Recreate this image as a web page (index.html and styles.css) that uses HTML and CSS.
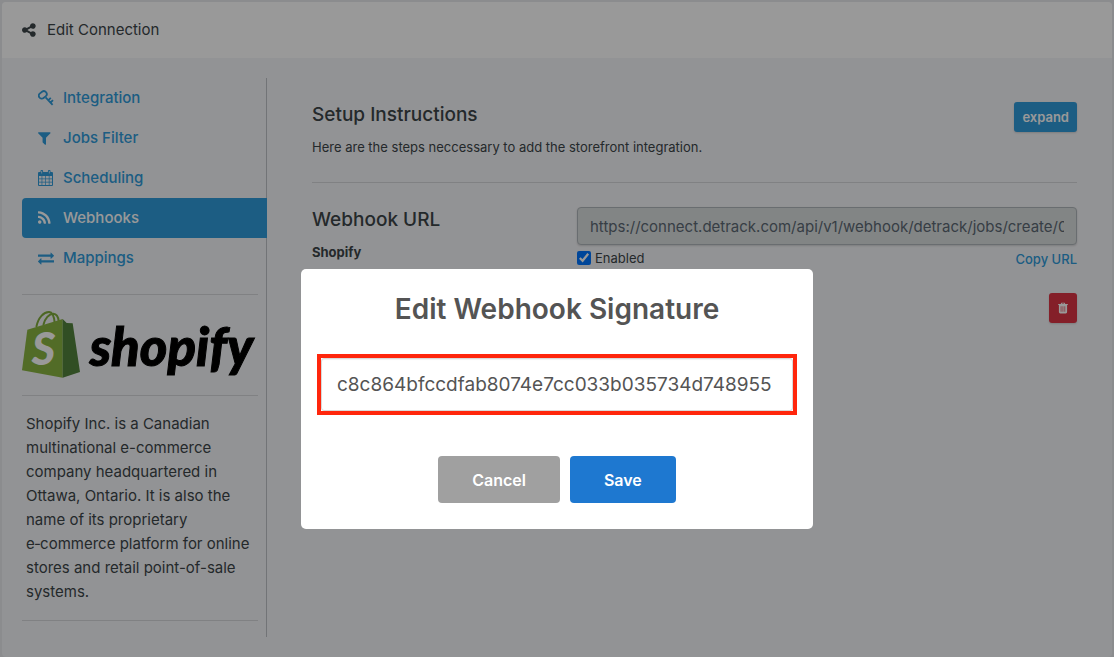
FILE: index.html
```
<!DOCTYPE html>
<html lang="en">
<head>
    <meta charset="UTF-8">
    <meta name="viewport" content="width=device-width, initial-scale=1.0">
    <title>Edit Connection</title>
    <link rel="stylesheet" href="styles.css">
</head>
<body>
    <div class="card">
        <header class="card-header">
            <svg class="icon" viewBox="256 0 1792 1792" aria-hidden="true"><path d="M1344 1024q133 0 226.500 93.500t93.500 226.500-93.500 226.500-226.500 93.500-226.500-93.500-93.500-226.500q0-12 2-34l-360-180q-92 86-218 86-133 0-226.500-93.500t-93.500-226.500 93.500-226.500 226.500-93.500q126 0 218 86l360-180q-2-22-2-34 0-133 93.500-226.500t226.500-93.500 226.500 93.500 93.500 226.500-93.500 226.500-226.500 93.500q-126 0-218-86l-360 180q2 22 2 34t-2 34l360 180q92-86 218-86z" transform="translate(128 0)"/></svg>
            <span>Edit Connection</span>
        </header>

        <div class="card-body">
            <aside class="sidebar">
                <nav class="nav">
                    <a class="nav-link" href="#">
                        <svg class="icon" viewBox="0 0 16 16" aria-hidden="true"><g fill="none" stroke="currentColor" stroke-width="1.800"><rect x=".6" y="2" width="8.400" height="5.800" rx="2.900" transform="rotate(-38 4.800 4.900)"/><path d="M7.600 7.400L14.600 14.800M10.400 10.200l2.400-2.400M12.600 12.500l2.400-2.400"/></g></svg>
                        Integration
                    </a>
                    <a class="nav-link" href="#">
                        <svg class="icon" viewBox="192 0 1792 1792" aria-hidden="true"><path d="M1595 295q17 41-14 70l-493 493v742q0 42-39 59-13 5-25 5-27 0-45-19l-256-256q-19-19-19-45v-486l-493-493q-31-29-14-70 17-39 59-39h1280q42 0 59 39z"/></svg>
                        Jobs Filter
                    </a>
                    <a class="nav-link" href="#">
                        <svg class="icon" viewBox="0 0 16 16" aria-hidden="true"><path fill-rule="evenodd" d="M1 2h1.500V1q0-1 1-1h.6q1 0 1 1v1h4.800V1q0-1 1-1h.6q1 0 1 1v1H14q1 0 1 1v12q0 1-1 1H1q-1 0-1-1V3q0-1 1-1zM1 6v2.500h2.600V6zM4.300 6v2.500h2.900V6zM7.900 6v2.500h2.900V6zM11.500 6v2.500H14V6zM1 9.200v2.500h2.600V9.200zM4.300 9.200v2.500h2.900V9.200zM7.900 9.200v2.500h2.900V9.200zM11.500 9.200v2.500H14V9.200zM1 12.400V15h2.600v-2.600zM4.300 12.400V15h2.900v-2.600zM7.900 12.400V15h2.900v-2.600zM11.500 12.400V15H14v-2.600zM3.400 1v2.500h.7V1zM10.900 1v2.500h.7V1z"/></svg>
                        Scheduling
                    </a>
                    <a class="nav-link active" href="#">
                        <svg class="icon" viewBox="192 0 1792 1792" aria-hidden="true"><path d="M576 1344q0 80-56 136t-136 56-136-56-56-136 56-136 136-56 136 56 56 136zm512 123q2 28-17 48-18 21-47 21h-135q-25 0-43-16.500t-20-41.500q-22-229-184.500-391.500t-391.500-184.500q-25-2-41.500-20t-16.500-43v-135q0-29 21-47 17-17 43-17h5q160 13 306 80.500t259 181.500q114 113 181.500 259t80.500 306zm512 2q2 27-18 47-18 20-46 20h-143q-26 0-44.500-17.500t-19.500-42.500q-12-215-101-408.500t-231.500-336-336-231.500-408.500-102q-25-1-42.500-19.500t-17.500-43.500v-143q0-28 20-46 18-18 44-18h3q262 13 501.500 120t425.500 294q187 186 294 425.500t120 501.500z"/></svg>
                        Webhooks
                    </a>
                    <a class="nav-link" href="#">
                        <svg class="icon" viewBox="0 0 1792 1792" aria-hidden="true"><path d="M1792 1184v192q0 13-9.500 22.500t-22.500 9.500h-1376v192q0 13-9.500 22.500t-22.500 9.500q-12 0-24-10l-319-320q-9-9-9-22 0-14 9-23l320-320q9-9 23-9 13 0 22.500 9.500t9.500 22.500v192h1376q13 0 22.500 9.500t9.500 22.500zm0-544q0 14-9 23l-320 320q-9 9-23 9-13 0-22.500-9.500t-9.500-22.500v-192h-1376q-13 0-22.500-9.500t-9.500-22.500v-192q0-13 9.500-22.500t22.500-9.500h1376v-192q0-14 9-23t23-9q12 0 24 10l319 319q9 9 9 23z"/></svg>
                        Mappings
                    </a>
                </nav>

                <div class="brand">
                    <hr>
                    <svg class="brand-logo" viewBox="0 0 708 204" role="img" aria-label="Shopify">
                        <g fill="none" stroke="#7fac3c" stroke-width="6">
                            <path d="M43 48C48 20 66 2 82 3q13 1 16 32"/>
                            <path d="M64 42C68 22 82 8 94 8q14 1 16 22"/>
                        </g>
                        <path fill="#89b541" d="M16 56l106-32v176L0 178z"/>
                        <path fill="#52823d" d="M122 24l12 12 18 1 22 146-52 17z"/>
                        <text class="logo-letter" x="29" y="163">S</text>
                        <text class="logo-name" x="203" y="165">shopify</text>
                    </svg>
                    <hr>
                    <p class="brand-text">Shopify Inc. is a Canadian multinational e-commerce company headquartered in Ottawa, Ontario. It is also the name of its proprietary e&#8209;commerce platform for online stores and retail point-of-sale systems.</p>
                    <hr>
                </div>
            </aside>

            <main class="content">
                <section class="setup">
                    <div>
                        <h2>Setup Instructions</h2>
                        <p>Here are the steps neccessary to add the storefront integration.</p>
                    </div>
                    <button class="btn btn-primary" type="button">expand</button>
                </section>
                <hr>
                <section class="webhook">
                    <div class="webhook-name">
                        <h2><label for="webhookUrl">Webhook URL</label></h2>
                        <strong>Shopify</strong>
                    </div>
                    <div class="webhook-form">
                        <input class="form-control" id="webhookUrl" type="text" readonly value="https://connect.detrack.com/api/v1/webhook/detrack/jobs/create/0">
                        <div class="webhook-options">
                            <label class="check"><input type="checkbox" checked> Enabled</label>
                            <a href="#">Copy URL</a>
                        </div>
                        <button class="btn btn-danger" type="button" aria-label="Delete">
                            <svg viewBox="0 0 11 12" aria-hidden="true"><path fill-rule="evenodd" d="M3 1.500L3.700.2h3.600L8 1.500h2.800v1.200H10V10.500Q10 12 8.600 12H2.400Q1 12 1 10.500V2.700H.2V1.500zM4.200 1.500h2.600L6.500 1h-2zM3 4v6h.7V4zM5.100 4v6h.7V4zM7.200 4v6h.7V4z"/></svg>
                        </button>
                    </div>
                </section>
            </main>
        </div>
    </div>

    <div class="overlay">
        <form class="modal" role="dialog" aria-labelledby="modalTitle">
            <h1 id="modalTitle">Edit Webhook Signature</h1>
            <div class="highlight">
                <input class="signature" type="text" aria-labelledby="modalTitle" value="c8c864bfccdfab8074e7cc033b035734d748955">
            </div>
            <div class="modal-actions">
                <button class="modal-btn cancel" type="button">Cancel</button>
                <button class="modal-btn save" type="button">Save</button>
            </div>
        </form>
    </div>
</body>
</html>
```
FILE: styles.css
```
* {
    box-sizing: border-box;
}
body {
    margin: 0;
    padding: 2px 2px 0;
    background: #e8eaed;
    color: #3c4549;
    font-family: Inter, "Liberation Sans", sans-serif;
    font-size: 15px;
    line-height: 24px;
}
h1, h2, p {
    margin: 0;
}
a {
    color: #309bda;
    text-decoration: none;
}
hr {
    margin: 16px 0;
    border: 0;
    border-top: 1px solid #d5d8db;
}
button, input {
    font-family: inherit;
}
.icon {
    width: 16px;
    height: 16px;
    fill: currentColor;
    flex-shrink: 0;
}

/* card */
.card {
    background: #f4f5f8;
    border-radius: 4px;
    overflow: hidden;
}
.card-header {
    display: flex;
    align-items: center;
    gap: 9px;
    padding: 16px 20px;
    background: #fff;
}
.card-body {
    display: flex;
    gap: 45px;
    padding: 20px 35px 20px 20px;
}

/* sidebar */
.sidebar {
    width: 245px;
    flex-shrink: 0;
    border-right: 1px solid #bfc2c6;
}
.nav {
    margin-right: -1px;
}
.nav-link {
    display: flex;
    align-items: center;
    gap: 9px;
    padding: 8px 16px;
    border-radius: 4px 0 0 4px;
    font-weight: 500;
}
.nav-link.active {
    background: #309bda;
    color: #fff;
}
.brand {
    padding-right: 8px;
}
.brand-logo {
    display: block;
    width: 100%;
    overflow: visible;
}
.logo-letter {
    fill: #fff;
    font: italic 900 136px Lato, sans-serif;
}
.logo-name {
    stroke: #000;
    stroke-width: 3px;
    font: italic 900 158px Lato, sans-serif;
}
.brand-text {
    padding-left: 4px;
}

/* main column */
.content {
    flex: 1;
    min-width: 0;
    padding-top: 24px;
}
h2 {
    font-size: 19px;
    line-height: 26px;
    font-weight: 500;
}
.setup {
    display: flex;
    justify-content: space-between;
    align-items: flex-start;
    margin-bottom: 24px;
}
.setup p {
    margin-top: 8px;
    font-size: 13px;
    line-height: 22px;
}
.content hr {
    margin: 0 0 24px;
}
.btn {
    display: flex;
    align-items: center;
    justify-content: center;
    height: 30px;
    padding: 0 8px;
    border: 0;
    border-radius: 3px;
    color: #fff;
    font-size: 13px;
    font-weight: 600;
    box-shadow: 0 1px 2px rgba(0,0,0,0.15);
}
.btn-primary {
    background: #309bda;
}
.btn-danger {
    width: 28px;
    margin: 24px 0 0 auto;
    background: #dc3545;
}
.btn-danger svg {
    width: 10px;
    height: 12px;
    fill: #fff;
    flex-shrink: 0;
}
.webhook {
    display: flex;
    justify-content: space-between;
    font-size: 13px;
    line-height: 20px;
}
.webhook-name strong {
    display: block;
    margin-top: 9px;
    font-weight: 700;
}
.webhook-form {
    width: 500px;
}
.form-control {
    display: block;
    width: 100%;
    height: 38px;
    padding: 6px 12px;
    border: 1px solid #b0b6bb;
    border-radius: 4px;
    background: #d9dede;
    color: #5c6873;
    font-size: 15px;
    box-shadow: 0 1px 2px rgba(0,0,0,0.15);
}
.webhook-options {
    display: flex;
    justify-content: space-between;
    align-items: flex-start;
    margin-top: 4px;
}
.webhook-options a {
    font-weight: 500;
}
.check {
    display: flex;
    align-items: center;
    gap: 4px;
    line-height: 18px;
}
.check input {
    width: 14px;
    height: 14px;
    margin: 0;
    accent-color: #0075ff;
}

/* modal */
.overlay {
    position: fixed;
    inset: 0;
    display: flex;
    align-items: flex-start;
    justify-content: center;
    padding-top: 269px;
    background: rgba(0,0,0,0.4);
}
.modal {
    width: 512px;
    padding: 20px 16px 26px;
    border-radius: 5px;
    background: #fff;
}
.modal h1 {
    color: #545454;
    font-size: 28px;
    line-height: 40px;
    font-weight: 600;
    text-align: center;
}
.highlight {
    margin-top: 25px;
    border: 4px solid #ff260c;
}
.signature {
    display: block;
    width: 100%;
    height: 53px;
    padding: 0 15px;
    border: 1px solid #d9d9d9;
    border-radius: 3px;
    background: #fff;
    color: #545454;
    font-size: 19px;
    box-shadow: inset 0 1px 1px rgba(0,0,0,0.06);
}
.modal-actions {
    display: flex;
    justify-content: center;
    gap: 10px;
    margin-top: 41px;
}
.modal-btn {
    height: 47px;
    padding: 0 34px;
    border: 0;
    border-radius: 4px;
    color: #fff;
    font-size: 16px;
    font-weight: 600;
}
.cancel {
    background: #a0a0a0;
}
.save {
    background: #1e78d0;
}
```
